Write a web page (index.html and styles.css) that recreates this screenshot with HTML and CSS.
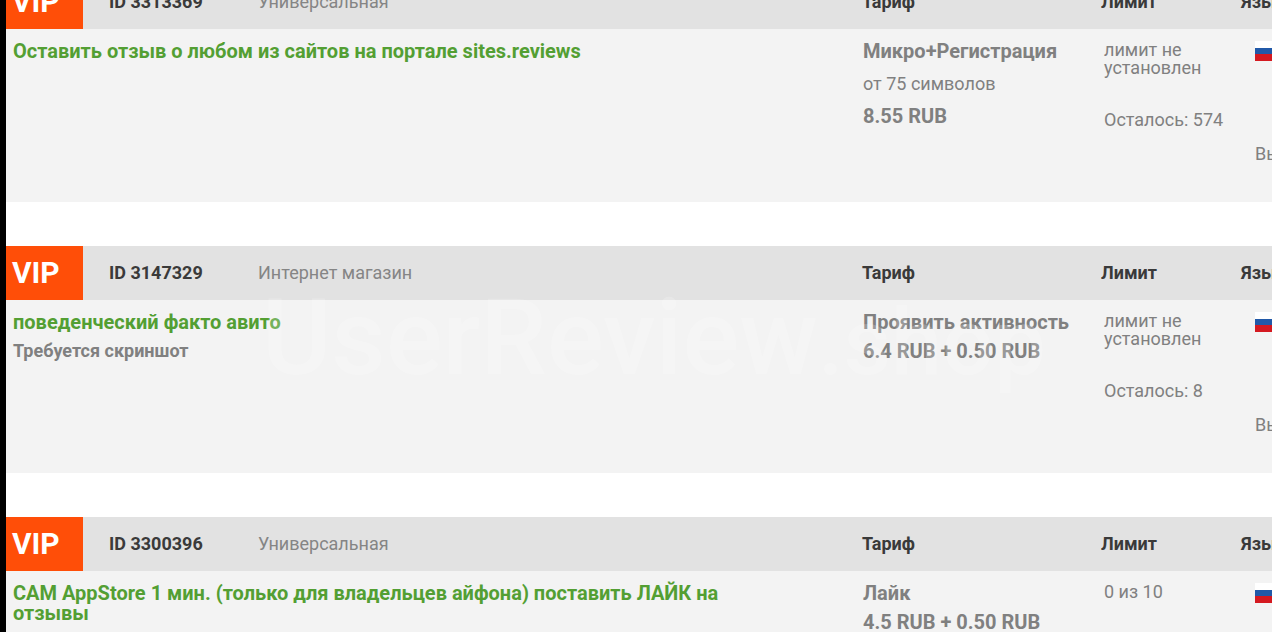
FILE: index.html
```html
<!DOCTYPE html>
<html lang="ru">
<head>
<meta charset="utf-8">
<title>Задания</title>
<link rel="stylesheet" href="styles.css">
</head>
<body>
<main class="tasks">
  <article class="task">
    <header class="row task-head">
      <div class="task-info"><span class="vip">VIP</span><span class="task-id">ID 3313369</span><span class="category">Универсальная</span></div>
      <span>Тариф</span><span>Лимит</span><span>Язык</span>
    </header>
    <div class="row task-body">
      <div class="summary"><a class="title" href="#">Оставить отзыв о любом из сайтов на портале sites.reviews</a></div>
      <div class="tariff"><strong>Микро+Регистрация</strong><span class="length">от 75 символов</span><strong class="price">8.55 RUB</strong></div>
      <div class="limit"><p>лимит не установлен</p><p class="left">Осталось: 574</p></div>
      <div class="lang"><svg class="flag" viewBox="0 0 30 20" role="img" aria-label="Русский"><path fill="#fff" d="M0 0h30v7H0z"/><path fill="#2159a8" d="M0 7h30v6H0z"/><path fill="#d41920" d="M0 13h30v7H0z"/></svg><span class="done">Вы</span></div>
    </div>
  </article>
  <article class="task">
    <header class="row task-head">
      <div class="task-info"><span class="vip">VIP</span><span class="task-id">ID 3147329</span><span class="category">Интернет магазин</span></div>
      <span>Тариф</span><span>Лимит</span><span>Язык</span>
    </header>
    <div class="row task-body">
      <div class="summary"><a class="title" href="#">поведенческий факто авито</a><strong class="note">Требуется скриншот</strong></div>
      <div class="tariff"><strong>Проявить активность</strong><strong>6.4 RUB + 0.50 RUB</strong></div>
      <div class="limit"><p>лимит не установлен</p><p class="left">Осталось: 8</p></div>
      <div class="lang"><svg class="flag" viewBox="0 0 30 20" role="img" aria-label="Русский"><path fill="#fff" d="M0 0h30v7H0z"/><path fill="#2159a8" d="M0 7h30v6H0z"/><path fill="#d41920" d="M0 13h30v7H0z"/></svg><span class="done">Вы</span></div>
    </div>
    <div class="watermark" aria-hidden="true">UserReview<span class="domain">.shop</span></div>
  </article>
  <article class="task">
    <header class="row task-head">
      <div class="task-info"><span class="vip">VIP</span><span class="task-id">ID 3300396</span><span class="category">Универсальная</span></div>
      <span>Тариф</span><span>Лимит</span><span>Язык</span>
    </header>
    <div class="row task-body">
      <div class="summary"><a class="title" href="#">САМ AppStore 1 мин. (только для владельцев айфона) поставить ЛАЙК на отзывы</a></div>
      <div class="tariff"><strong>Лайк</strong><strong>4.5 RUB + 0.50 RUB</strong></div>
      <div class="limit"><p>0 из 10</p></div>
      <div class="lang"><svg class="flag" viewBox="0 0 30 20" role="img" aria-label="Русский"><path fill="#fff" d="M0 0h30v7H0z"/><path fill="#2159a8" d="M0 7h30v6H0z"/><path fill="#d41920" d="M0 13h30v7H0z"/></svg></div>
    </div>
  </article>
</main>
</body>
</html>
```
FILE: styles.css
```css
* {
  box-sizing: border-box;
}

body {
  margin: 0;
  height: 100vh;
  overflow: hidden;
  border-left: 6px solid #000;
  background: #fff;
  color: #808080;
  font: 18px/18px Roboto, sans-serif;
}

p {
  margin: 0;
}

.tasks {
  display: grid;
  gap: 44px;
  margin-top: -25px;
}

.task {
  position: relative;
}

.row {
  display: grid;
  grid-template-columns: minmax(0, 1fr) 239px 140px 31px;
  overflow: hidden;
}

.task-head {
  align-items: center;
  min-height: 54px;
  background: #e2e2e2;
  color: #3a3a3a;
  font-weight: 700;
  white-space: nowrap;
}

.task-info {
  display: flex;
  align-items: center;
}

.vip {
  width: 77px;
  padding-left: 6px;
  background: #ff4e08;
  color: #fff;
  font-size: 30px;
  line-height: 54px;
}

.task-id {
  width: 175px;
  padding-left: 26px;
}

.category {
  color: #858585;
  font-weight: 400;
}

.task-body {
  min-height: 173px;
  padding-top: 12px;
  background: #f3f3f3;
}

.summary,
.tariff {
  display: flex;
  flex-direction: column;
  align-items: flex-start;
  gap: 9px;
  font-size: 20px;
  line-height: 20px;
}

.summary {
  padding: 0 80px 0 7px;
}

.title {
  color: #539f33;
  font-weight: 700;
  text-decoration: none;
}

.note,
.length {
  font-size: 18px;
}

.tariff {
  padding-left: 1px;
}

.length {
  margin-top: 4px;
}

.price {
  margin-top: 3px;
}

.limit {
  padding-left: 3px;
}

.left {
  margin-top: 34px;
}

.lang {
  padding-left: 14px;
}

.flag {
  display: block;
  width: 30px;
  height: 20px;
}

.done {
  display: block;
  margin-top: 84px;
}

.watermark {
  position: absolute;
  top: 32px;
  left: 256px;
  color: rgba(255, 255, 255, 0.2);
  font-size: 106px;
  font-weight: 500;
  line-height: 120px;
  pointer-events: none;
}

.domain {
  font-size: 92px;
}
```
